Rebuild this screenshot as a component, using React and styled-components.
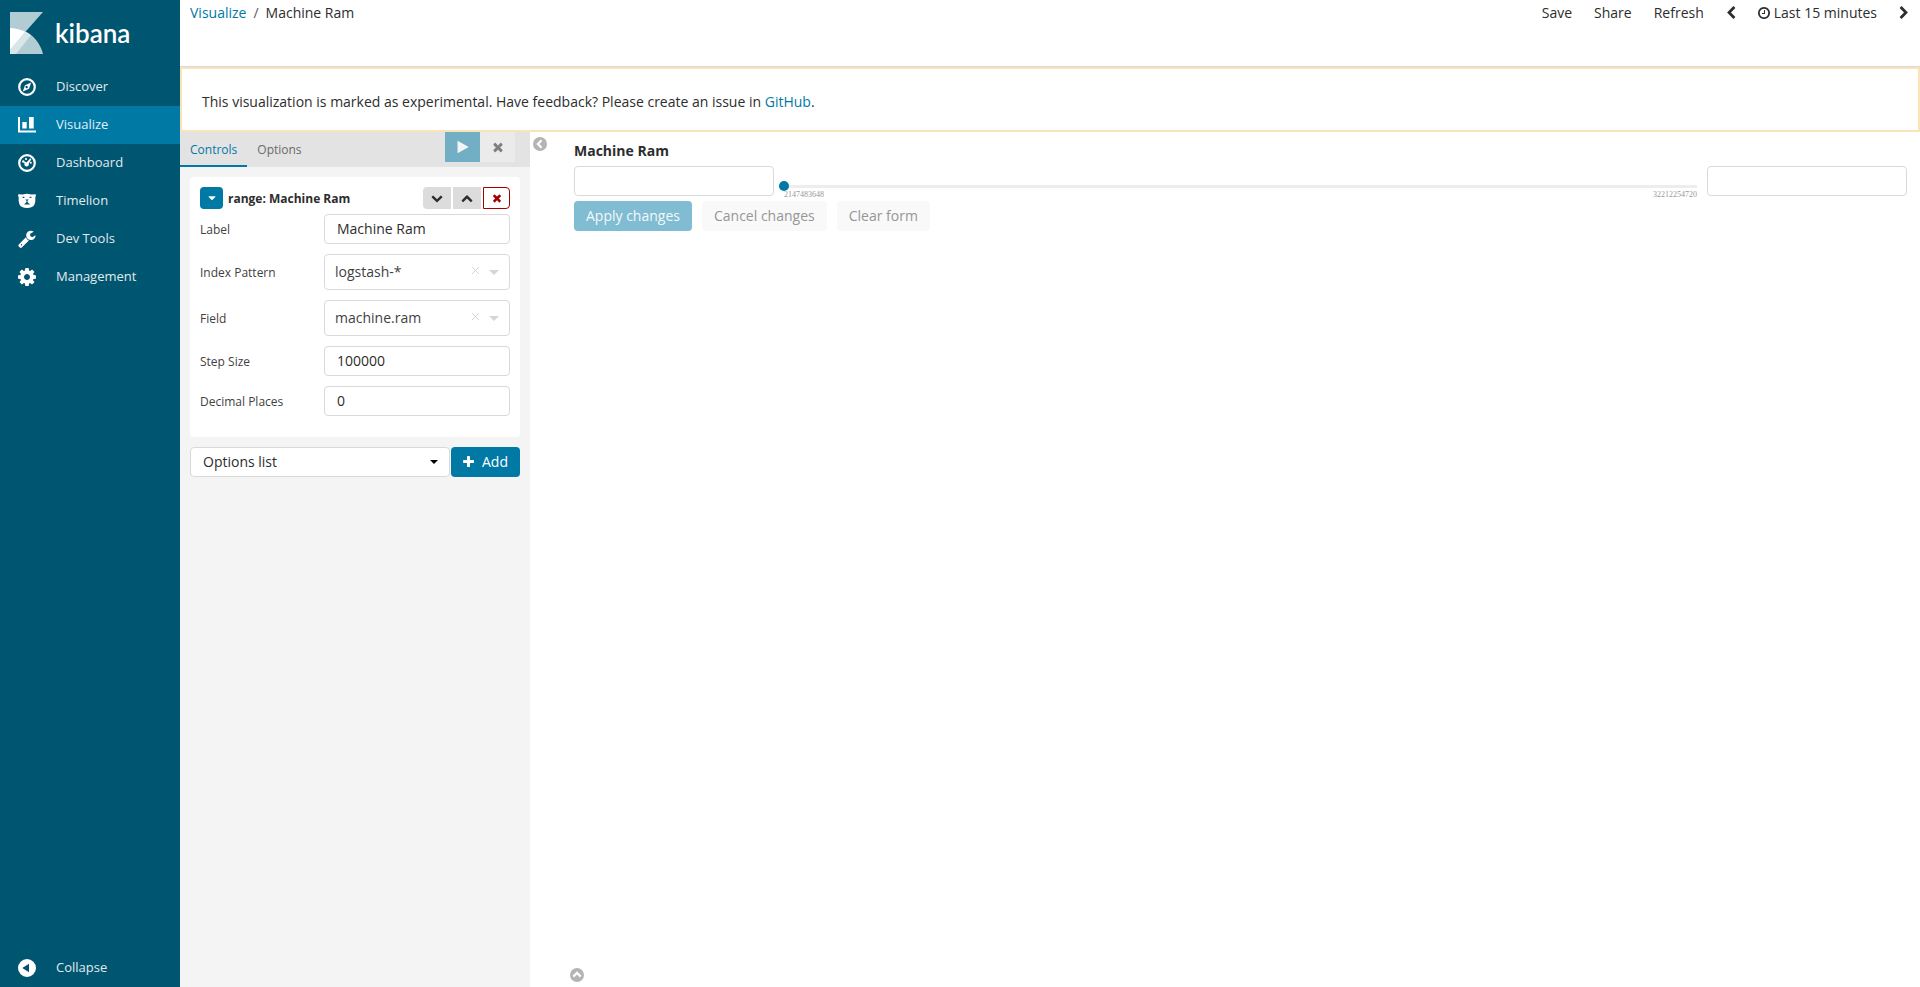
import React, { useState } from "react";
import styled, { createGlobalStyle } from "styled-components";

const GlobalStyle = createGlobalStyle`
  *, *::before, *::after { box-sizing: border-box; }
  body {
    margin: 0;
    background: #fff;
    color: #2d2d2d;
    font-family: "Open Sans", "Liberation Sans", sans-serif;
    font-size: 14px;
    line-height: 20px;
  }
  button, input, select { font: inherit; color: inherit; margin: 0; }
  button { border: 0; padding: 0; background: none; cursor: pointer; }
  a { color: #0079a5; text-decoration: none; }
`;

const paths = {
  times:
    "M1490 1322q0 40-28 68l-136 136q-28 28-68 28t-68-28l-294-294-294 294q-28 28-68 28t-68-28l-136-136q-28-28-28-68t28-68l294-294-294-294q-28-28-28-68t28-68l136-136q28-28 68-28t68 28l294 294 294-294q28-28 68-28t68 28l136 136q28 28 28 68t-28 68l-294 294 294 294q28 28 28 68z",
  left:
    "M1427 301l-531 531 531 531q19 19 19 45t-19 45l-166 166q-19 19-45 19t-45-19l-742-742q-19-19-19-45t19-45l742-742q19-19 45-19t45 19l166 166q19 19 19 45t-19 45z",
  right:
    "M1363 877l-742 742q-19 19-45 19t-45-19l-166-166q-19-19-19-45t19-45l531-531-531-531q-19-19-19-45t19-45l166-166q19-19 45-19t45 19l742 742q19 19 19 45t-19 45z",
  down:
    "M1683 808l-742 741q-19 19-45 19t-45-19l-742-741q-19-19-19-45.5t19-45.5l166-165q19-19 45-19t45 19l531 531 531-531q19-19 45-19t45 19l166 165q19 19 19 45.5t-19 45.5z",
  up:
    "M1683 1331l-166 165q-19 19-45 19t-45-19l-531-531-531 531q-19 19-45 19t-45-19l-166-165q-19-19-19-45.5t19-45.5l742-741q19-19 45-19t45 19l742 741q19 19 19 45.5t-19 45.5z",
  caret:
    "M1408 704q0 26-19 45l-448 448q-19 19-45 19t-45-19l-448-448q-19-19-19-45t19-45 45-19h896q26 0 45 19t19 45z",
  plus:
    "M1600 736v192q0 40-28 68t-68 28h-416v416q0 40-28 68t-68 28h-192q-40 0-68-28t-28-68v-416h-416q-40 0-68-28t-28-68v-192q0-40 28-68t68-28h416v-416q0-40 28-68t68-28h192q40 0 68 28t28 68v416h416q40 0 68 28t28 68z",
  play:
    "M1576 927l-1328 738q-23 13-39.5 3t-16.5-36v-1472q0-26 16.5-36t39.5 3l1328 738q23 13 23 31t-23 31z",
  clock:
    "M1024 544v448q0 14-9 23t-23 9h-320q-14 0-23-9t-9-23v-64q0-14 9-23t23-9h224v-352q0-14 9-23t23-9h64q14 0 23 9t9 23zm416 352q0-148-73-273t-198-198-273-73-273 73-198 198-73 273 73 273 198 198 273 73 273-73 198-198 73-273zm224 0q0 209-103 385.5t-279.5 279.5-385.5 103-385.5-103-279.5-279.5-103-385.5 103-385.5 279.5-279.5 385.5-103 385.5 103 279.5 279.5 103 385.5z",
  wrench:
    "M448 1472q0-26-19-45t-45-19-45 19-19 45 19 45 45 19 45-19 19-45zm644-420l-682 682q-37 37-90 37-52 0-91-37l-106-108q-38-36-38-90 0-53 38-91l681-681q39 98 114.5 173.5t173.5 114.5zm634-435q0 39-23 106-47 134-164.5 217.5t-258.5 83.5q-185 0-316.5-131.5t-131.5-316.5 131.5-316.5 316.5-131.5q58 0 121.5 16.5t107.5 46.5q16 11 16 28t-16 28l-293 169v224l193 107q5-3 79-48.5t135.5-81 70.5-35.5q15 0 23.5 10t8.5 25z",
  cog:
    "M1152 896q0-106-75-181t-181-75-181 75-75 181 75 181 181 75 181-75 75-181zm512-109v222q0 12-8 23t-20 13l-185 28q-19 54-39 91 35 50 107 138 10 12 10 25t-9 23q-27 37-99 108t-94 71q-12 0-26-9l-138-108q-44 23-91 38-16 136-29 186-7 28-36 28h-222q-14 0-24.5-8.5t-11.5-21.5l-28-184q-49-16-90-37l-141 107q-10 9-25 9-14 0-25-11-126-114-165-168-7-10-7-23 0-12 8-23 15-21 51-66.5t54-70.5q-27-50-41-99l-183-27q-13-2-21-12.5t-8-23.5v-222q0-12 8-23t19-13l186-28q14-46 39-92-40-57-107-138-10-12-10-24 0-10 9-23 26-36 98.5-107.5t94.5-71.5q13 0 26 10l138 107q44-23 91-38 16-136 29-186 7-28 36-28h222q14 0 24.5 8.5t11.5 21.5l28 184q49 16 90 37l142-107q9-9 24-9 13 0 25 10 129 119 165 170 7 8 7 22 0 12-8 23-15 21-51 66.5t-54 70.5q26 50 41 98l183 28q13 2 21 12.5t8 23.5z",
};

function Glyph({ name, size = 14, width = size, box = "0 0 1792 1792" }) {
  return (
    <svg width={width} height={size} viewBox={box} fill="currentColor" aria-hidden="true">
      <path d={paths[name]} />
    </svg>
  );
}

const drawings = {
  compass: (
    <>
      <circle cx="9" cy="9" r="7.8" fill="none" stroke="currentColor" strokeWidth="2.2" />
      <path fillRule="evenodd" d="M13.2 4.6 11 10.8 4.8 13.4 7 7.2ZM9 7.9a1.2 1.2 0 1 0 .1 2.3 1.2 1.2 0 0 0-.1-2.3Z" />
    </>
  ),
  bars: (
    <>
      <path d="M0 1h2v13.500h16V16.500H0Z" />
      <path d="M4.300 6H8.700V12.500H4.300ZM11 1h4.700V12.500H11Z" />
    </>
  ),
  gauge: (
    <>
      <circle cx="9" cy="9" r="7.8" fill="none" stroke="currentColor" strokeWidth="2.2" />
      <circle cx="5.300" cy="7.500" r="1.200" />
      <circle cx="8" cy="5" r="1.100" />
      <circle cx="12.800" cy="8.800" r="1" />
      <path d="M12.300 4.200 13.400 5.200l-2.600 4.300a2.300 2.300 0 1 1-4.200-.5L5.600 8.500l1.200-1 1.700 1Z" />
    </>
  ),
  bear: (
    <path
      fillRule="evenodd"
      d="M0 3.200Q0 2.200 1 2.200L4.200 2.400Q5 2.700 5.600 2.200 9 1.200 12.400 2.200 13 2.700 13.800 2.400L17 2.200Q18 2.200 18 3.200L17.300 5.500Q17.800 9 16.500 12.500 15 15.600 9 16 3 15.600 1.500 12.500.200 9 .700 5.500ZM4.600 4.800v1.200h1.800V4.800ZM11.600 4.800v1.200h1.800V4.800ZM7.200 7.400 8.500 8.700V10L6 12.600h6L9.500 10V8.700L10.800 7.400Z"
    />
  ),
  back: <path fillRule="evenodd" d="M9 0a9 9 0 1 0 0 18A9 9 0 0 0 9 0ZM11 4.800v8.400L4.300 9Z" />,
};

function NavIcon({ name }) {
  if (paths[name]) {
    return <Glyph name={name} size={18} box={name === "cog" ? "128 128 1536 1536" : "64 60 1690 1720"} />;
  }
  return (
    <svg width="18" height="18" viewBox="0 0 18 18" fill="currentColor" aria-hidden="true">
      {drawings[name]}
    </svg>
  );
}

function CircleChevron({ turn = 0 }) {
  return (
    <svg width="14" height="14" viewBox="0 0 14 14" aria-hidden="true">
      <circle cx="7" cy="7" r="7" fill="#b4b4b4" />
      <path
        d="M8.600 3.300 4.900 7l3.700 3.700"
        transform={`rotate(${turn} 7 7)`}
        fill="none"
        stroke="#fff"
        strokeWidth="2.200"
      />
    </svg>
  );
}

const Shell = styled.div`
  display: flex;
  min-height: 100vh;
`;

const Sidebar = styled.nav`
  flex: 0 0 180px;
  display: flex;
  flex-direction: column;
  background: #005571;
  color: #fff;
`;

const Brand = styled.a`
  display: flex;
  align-items: center;
  gap: 12px;
  height: 68px;
  padding: 0 10px 2px;
  color: #fff;
  font-family: Lato, "Open Sans", sans-serif;
  font-size: 26px;
  font-weight: 600;
`;

const NavLink = styled.a`
  display: flex;
  align-items: center;
  gap: 20px;
  height: 38px;
  padding: 0 18px;
  font-size: 13px;
  color: ${(p) => (p.$active ? "#e0f0f5" : "#e0ebee")};
  background: ${(p) => (p.$active ? "#0079a5" : "transparent")};
  svg { color: #fff; }
`;

const NavLabel = styled.span`
  padding-bottom: 2px;
`;

const Spacer = styled.div`
  flex: 1;
`;

const Page = styled.div`
  flex: 1;
  min-width: 0;
  display: flex;
  flex-direction: column;
`;

const TopBar = styled.header`
  display: flex;
  justify-content: space-between;
  align-items: flex-start;
  height: 67px;
  padding: 3px 0 0 10px;
  border-bottom: 1px solid #d9d9d9;
`;

const Crumbs = styled.div`
  display: flex;
  gap: 7px;
  span { color: #5a5a5a; }
`;

const Menu = styled.div`
  display: flex;
`;

const MenuButton = styled.button`
  display: flex;
  align-items: center;
  gap: 4px;
  height: 20px;
  padding: 0 11px;
`;

const Callout = styled.div`
  border: 2px solid #fbe3b8;
  padding: 23px 20px 18px;
`;

const Workspace = styled.div`
  flex: 1;
  display: flex;
`;

const Editor = styled.aside`
  flex: 0 0 350px;
  background: #f4f4f4;
  font-size: 12px;
`;

const TabBar = styled.div`
  display: flex;
  height: 35px;
  padding-right: 15px;
  background: #e3e3e3;
`;

const Tab = styled.button`
  padding: 2px 10px 0;
  border-bottom: 2px solid ${(p) => (p.$active ? "#0079a5" : "transparent")};
  color: ${(p) => (p.$active ? "#0079a5" : "#6a6a6a")};
`;

const TabAction = styled.button`
  display: flex;
  align-items: center;
  justify-content: center;
  width: 35px;
  height: 30px;
  background: ${(p) => (p.$primary ? "#72afc5" : "#ebebeb")};
  color: ${(p) => (p.$primary ? "#f4f4f4" : "#808080")};
`;

const EditorBody = styled.div`
  display: flex;
  flex-direction: column;
  gap: 10px;
  padding: 10px;
`;

const Card = styled.section`
  display: flex;
  flex-direction: column;
  gap: 10px;
  padding: 10px 10px 21px;
  border-radius: 4px;
  background: #fff;
`;

const CardHead = styled.div`
  display: flex;
  align-items: center;
  gap: 2px;
  height: 22px;
  margin-bottom: -5px;
`;

const CardTitle = styled.h2`
  flex: 1;
  margin: 0 0 0 3px;
  padding-top: 2px;
  font-size: 12px;
  line-height: 20px;
  font-weight: 700;
`;

const SmallButton = styled.button`
  display: flex;
  align-items: center;
  justify-content: center;
  width: ${(p) => ({ primary: 23, danger: 27 }[p.$tone] || 28)}px;
  height: 22px;
  border-radius: ${(p) => p.$radius || "4px"};
  background: ${(p) => ({ primary: "#0079a5", danger: "#fff" }[p.$tone] || "#dcdcdc")};
  color: ${(p) => ({ primary: "#fff", danger: "#a30000" }[p.$tone] || "#2d2d2d")};
  border: ${(p) => (p.$tone === "danger" ? "1px solid #a30000" : "0")};
`;

const FieldRow = styled.div`
  display: grid;
  grid-template-columns: 2fr 3fr;
  align-items: center;
  color: #3f3f3f;
  label { padding-top: 2px; }
`;

const TextBox = styled.input`
  width: ${(p) => p.$width || "100%"};
  height: 30px;
  padding: 0 12px 2px;
  border: 1px solid #d9d9d9;
  border-radius: 4px;
  background: #fff;
  color: #2d2d2d;
  font-size: 14px;
  outline: 0;
`;

const Picker = styled.div`
  position: relative;
  flex: 1;
  height: ${(p) => p.$height}px;
`;

const PickerSelect = styled.select`
  appearance: none;
  width: 100%;
  height: 100%;
  padding: 0 40px 0 ${(p) => p.$indent}px;
  border: 1px solid #d9d9d9;
  border-radius: 4px;
  background: #fff;
  color: ${(p) => p.$color};
  font-size: 14px;
  outline: 0;
`;

const PickerMarks = styled.div`
  position: absolute;
  top: 0;
  bottom: 0;
  right: 9px;
  display: flex;
  align-items: center;
  gap: 7px;
  color: ${(p) => p.$color};
  pointer-events: none;
`;

const ClearButton = styled.button`
  display: flex;
  padding-bottom: 3px;
  pointer-events: auto;
`;

const AddRow = styled.div`
  display: flex;
  gap: 1px;
`;

const Button = styled.button`
  display: flex;
  align-items: center;
  gap: 8px;
  height: 30px;
  padding: 0 12px;
  border-radius: 4px;
  font-size: 14px;
  background: ${(p) => p.$bg || "#f9f9f9"};
  color: ${(p) => p.$fg || "#969696"};
`;

const Canvas = styled.main`
  flex: 1;
  min-width: 0;
  display: flex;
`;

const Gutter = styled.div`
  flex: 0 0 40px;
  padding: 5px 3px;
`;

const IconButton = styled.button`
  display: flex;
`;

const Visualization = styled.div`
  flex: 1;
  min-width: 0;
  display: flex;
  flex-direction: column;
  padding: 9px 13px 5px 0;
`;

const Control = styled.section`
  padding-left: 4px;
`;

const ControlTitle = styled.h3`
  margin: 0 0 5px;
  font-size: 14px;
  line-height: 20px;
  font-weight: 700;
`;

const RangeRow = styled.div`
  display: flex;
  gap: 5px;
  height: 30px;
  margin-bottom: 5px;
`;

const SliderBox = styled.div`
  flex: 1;
  padding-top: 15px;
`;

const Slider = styled.input`
  appearance: none;
  display: block;
  width: 100%;
  height: 10px;
  margin: 0;
  background: linear-gradient(#ededed, #ededed) no-repeat center / calc(100% - 10px) 3px;
  &::-webkit-slider-thumb {
    appearance: none;
    width: 10px;
    height: 10px;
    border-radius: 50%;
    background: #0079a5;
  }
`;

const SliderLabels = styled.div`
  display: flex;
  justify-content: space-between;
  padding: 0 5px;
  font-family: "Liberation Serif", serif;
  font-size: 8px;
  line-height: 8px;
  color: #999;
`;

const Actions = styled.div`
  display: flex;
  gap: 10px;
`;

const SpyToggle = styled.div`
  margin-top: auto;
`;

const navItems = [
  ["Discover", "compass"],
  ["Visualize", "bars"],
  ["Dashboard", "gauge"],
  ["Timelion", "bear"],
  ["Dev Tools", "wrench"],
  ["Management", "cog"],
];

function TextField({ id, label, initial }) {
  const [value, setValue] = useState(initial);
  return (
    <FieldRow>
      <label htmlFor={id}>{label}</label>
      <TextBox id={id} value={value} onChange={(e) => setValue(e.target.value)} />
    </FieldRow>
  );
}

function SelectField({ id, label, value }) {
  return (
    <FieldRow>
      <label htmlFor={id}>{label}</label>
      <Picker $height={36}>
        <PickerSelect id={id} $indent={10} $color="#3f3f3f">
          <option>{value}</option>
        </PickerSelect>
        <PickerMarks $color="#d5d5d5">
          <ClearButton type="button" aria-label={`Clear ${label}`}>
            <svg width="9" height="9" viewBox="0 0 9 9" stroke="currentColor" aria-hidden="true">
              <path d="M1 1l7 7M8 1l-7 7" />
            </svg>
          </ClearButton>
          <svg width="14" height="6" viewBox="0 0 14 6" fill="currentColor" aria-hidden="true">
            <path d="M2 1h10L7 6Z" />
          </svg>
        </PickerMarks>
      </Picker>
    </FieldRow>
  );
}

export default function App() {
  const [level, setLevel] = useState(2147483648);
  return (
    <Shell>
      <GlobalStyle />
      <Sidebar>
        <Brand href="#home">
          <svg width="33" height="42" viewBox="0 0 33 42" aria-hidden="true">
            <path d="M0 0H33L15.500 19.800Q8.500 16 0 16Z" fill="#b2ccd4" />
            <path d="M0 16C16 16 29 26 33 42H0Z" fill="#b2ccd4" />
            <path d="M0 16Q8.500 16 15.500 19.800L0 38Z" fill="#fff" />
            <path d="M15.500 19.800Q18.500 21.200 21 23.300L6 42H0V38Z" fill="#d8e5e9" />
          </svg>
          kibana
        </Brand>
        {navItems.map(([label, icon]) => (
          <NavLink key={label} href="#app" $active={label === "Visualize"}>
            <NavIcon name={icon} />
            <NavLabel>{label}</NavLabel>
          </NavLink>
        ))}
        <Spacer />
        <NavLink href="#collapse">
          <NavIcon name="back" />
          <NavLabel>Collapse</NavLabel>
        </NavLink>
      </Sidebar>

      <Page>
        <TopBar>
          <Crumbs>
            <a href="#visualize">Visualize</a>
            <span>/</span>
            <div>Machine Ram</div>
          </Crumbs>
          <Menu>
            <MenuButton>Save</MenuButton>
            <MenuButton>Share</MenuButton>
            <MenuButton>Refresh</MenuButton>
            <MenuButton aria-label="Earlier"><Glyph name="left" width={10} box="256 0 1280 1792" /></MenuButton>
            <MenuButton><Glyph name="clock" width={12} box="128 0 1536 1792" />Last 15 minutes</MenuButton>
            <MenuButton aria-label="Later"><Glyph name="right" width={10} box="256 0 1280 1792" /></MenuButton>
          </Menu>
        </TopBar>

        <Callout>
          This visualization is marked as experimental. Have feedback? Please create an issue in{" "}
          <a href="#github">GitHub</a>.
        </Callout>

        <Workspace>
          <Editor>
            <TabBar>
              <Tab $active>Controls</Tab>
              <Tab>Options</Tab>
              <Spacer />
              <TabAction $primary aria-label="Apply"><Glyph name="play" /></TabAction>
              <TabAction aria-label="Discard"><Glyph name="times" /></TabAction>
            </TabBar>
            <EditorBody>
              <Card>
                <CardHead>
                  <SmallButton $tone="primary" aria-label="Toggle"><Glyph name="caret" size={12} /></SmallButton>
                  <CardTitle>range: Machine Ram</CardTitle>
                  <SmallButton $radius="4px 0 0 4px" aria-label="Move down"><Glyph name="down" size={12} /></SmallButton>
                  <SmallButton $radius="0" aria-label="Move up"><Glyph name="up" size={12} /></SmallButton>
                  <SmallButton $tone="danger" $radius="0 4px 4px 0" aria-label="Remove"><Glyph name="times" size={12} /></SmallButton>
                </CardHead>
                <TextField id="label" label="Label" initial="Machine Ram" />
                <SelectField id="index" label="Index Pattern" value="logstash-*" />
                <SelectField id="field" label="Field" value="machine.ram" />
                <TextField id="step" label="Step Size" initial="100000" />
                <TextField id="decimals" label="Decimal Places" initial="0" />
              </Card>
              <AddRow>
                <Picker $height={30}>
                  <PickerSelect $indent={12} $color="#2d2d2d" aria-label="Control type">
                    <option>Options list</option>
                  </PickerSelect>
                  <PickerMarks $color="#000">
                    <svg width="14" height="6" viewBox="0 0 14 6" fill="currentColor" aria-hidden="true">
                      <path d="M3 1h8L7 5Z" />
                    </svg>
                  </PickerMarks>
                </Picker>
                <Button $bg="#0079a5" $fg="#fff">
                  <Glyph name="plus" width={11} box="192 0 1408 1792" />
                  Add
                </Button>
              </AddRow>
            </EditorBody>
          </Editor>

          <Canvas>
            <Gutter>
              <IconButton aria-label="Hide editor"><CircleChevron /></IconButton>
            </Gutter>
            <Visualization>
              <Control>
                <ControlTitle>Machine Ram</ControlTitle>
                <RangeRow>
                  <TextBox $width="200px" aria-label="Minimum" />
                  <SliderBox>
                    <Slider
                      type="range"
                      aria-label="Machine Ram"
                      min={2147483648}
                      max={32212254720}
                      value={level}
                      onChange={(e) => setLevel(Number(e.target.value))}
                    />
                    <SliderLabels>
                      <span>2147483648</span>
                      <span>32212254720</span>
                    </SliderLabels>
                  </SliderBox>
                  <TextBox $width="200px" aria-label="Maximum" />
                </RangeRow>
                <Actions>
                  <Button $bg="#80bcd2" $fg="#f4f9fb">Apply changes</Button>
                  <Button>Cancel changes</Button>
                  <Button>Clear form</Button>
                </Actions>
              </Control>
              <SpyToggle>
                <IconButton aria-label="Show details"><CircleChevron turn={90} /></IconButton>
              </SpyToggle>
            </Visualization>
          </Canvas>
        </Workspace>
      </Page>
    </Shell>
  );
}
